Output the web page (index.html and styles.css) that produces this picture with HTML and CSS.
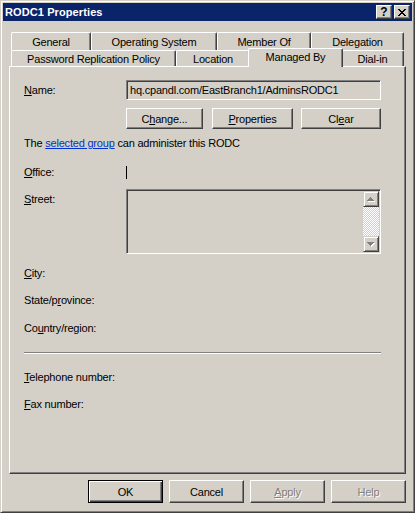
FILE: index.html
```html
<!DOCTYPE html>
<html>
<head>
<meta charset="utf-8">
<title>RODC1 Properties</title>
<link rel="stylesheet" href="styles.css">
</head>
<body>
<div class="window">
  <div class="titlebar">
    <span class="title">RODC1 Properties</span>
    <div class="tb-buttons">
      <div class="tb-btn help">?</div>
      <div class="tb-btn close">
        <svg width="8" height="7" viewBox="0 0 8 7" shape-rendering="crispEdges"><path d="M0 0h2v1H0zM6 0h2v1H6zM1 1h2v1H1zM5 1h2v1H5zM2 2h4v1H2zM3 3h2v1H3zM2 4h4v1H2zM1 5h2v1H1zM5 5h2v1H5zM0 6h2v1H0zM6 6h2v1H6z" fill="#000"/></svg>
      </div>
    </div>
  </div>

  <div class="tabs">
    <div class="tab-row back">
      <div class="tab w-general">General</div>
      <div class="tab w-os">Operating System</div>
      <div class="tab w-member">Member Of</div>
      <div class="tab w-deleg">Delegation</div>
    </div>
    <div class="tab-row front">
      <div class="tab w-prp">Password Replication Policy</div>
      <div class="tab w-loc">Location</div>
      <div class="tab sel w-managed">Managed By</div>
      <div class="tab w-dial">Dial-in</div>
    </div>
  </div>

  <div class="panel">
    <div class="row name-row">
      <span class="label"><u>N</u>ame:</span>
      <div class="field">hq.cpandl.com/EastBranch1/AdminsRODC1</div>
    </div>
    <div class="row btn-row">
      <span></span>
      <div class="btn-group">
        <div class="btn b-change">C<u>h</u>ange...</div>
        <div class="btn b-props"><u>P</u>roperties</div>
        <div class="btn b-clear">Cl<u>e</u>ar</div>
      </div>
    </div>
    <div class="info">The <a class="link">selected group</a> can administer this RODC</div>
    <div class="row office-row">
      <span class="label"><u>O</u>ffice:</span>
      <div class="caret-cell"><span class="caret"></span></div>
    </div>
    <div class="row street-row">
      <span class="label street-label"><u>S</u>treet:</span>
      <div class="textarea">
        <div class="scrollbar">
          <div class="sb-btn">
            <svg width="8" height="5" viewBox="0 0 8 5" shape-rendering="crispEdges"><path d="M4 1h1v1H4zM3 2h3v1H3zM2 3h5v1H2zM1 4h7v1H1z" fill="#fff"/><path d="M3 0h1v1H3zM2 1h3v1H2zM1 2h5v1H1zM0 3h7v1H0z" fill="#808080"/></svg>
          </div>
          <div class="sb-track"></div>
          <div class="sb-btn">
            <svg width="8" height="5" viewBox="0 0 8 5" shape-rendering="crispEdges"><path d="M1 1h7v1H1zM2 2h5v1H2zM3 3h3v1H3zM4 4h1v1H4z" fill="#fff"/><path d="M0 0h7v1H0zM1 1h5v1H1zM2 2h3v1H2zM3 3h1v1H3z" fill="#808080"/></svg>
          </div>
        </div>
      </div>
    </div>
    <div class="line city"><u>C</u>ity:</div>
    <div class="line state">State/p<u>r</u>ovince:</div>
    <div class="line country">Co<u>u</u>ntry/region:</div>
    <div class="separator"></div>
    <div class="line phone"><u>T</u>elephone number:</div>
    <div class="line fax"><u>F</u>ax number:</div>
  </div>

  <div class="dlg-buttons">
    <div class="btn dlg default">OK</div>
    <div class="btn dlg">Cancel</div>
    <div class="btn dlg disabled"><span><u>A</u>pply</span></div>
    <div class="btn dlg disabled">Help</div>
  </div>
</div>
</body>
</html>
```

FILE: styles.css
```css
* {
  box-sizing: border-box;
}

html,
body {
  margin: 0;
  padding: 0;
}

body {
  background: #d4d0c8;
  font-family: "Liberation Sans", Arial, sans-serif;
  font-size: 11px;
  letter-spacing: -0.2px;
  color: #000;
}

u {
  text-decoration: underline;
  text-underline-offset: 1px;
}

.window {
  width: 415px;
  height: 513px;
  border: 1px solid;
  border-color: #d4d0c8 #404040 #404040 #d4d0c8;
  box-shadow: inset 1px 1px #fff, inset -1px -1px #808080;
  padding: 2px;
}

/* Title bar */
.titlebar {
  height: 18px;
  background: #0a246a;
  display: flex;
  align-items: center;
  justify-content: space-between;
  padding: 0 2px;
}

.title {
  color: #fff;
  font-weight: bold;
  letter-spacing: 0.1px;
  line-height: 14px;
}

.tb-buttons {
  display: flex;
  gap: 2px;
}

.tb-btn {
  width: 16px;
  height: 14px;
  background: #d4d0c8;
  border: 1px solid;
  border-color: #fff #404040 #404040 #fff;
  box-shadow: inset -1px -1px #808080;
  display: flex;
  align-items: center;
  justify-content: center;
}

.tb-btn.help {
  font-weight: bold;
  font-size: 12px;
  line-height: 12px;
  letter-spacing: 0;
  padding-bottom: 1px;
}

.tb-btn.close svg {
  display: block;
  margin-right: 1px;
}

/* Tabs */
.tabs {
  margin: 11px 0 0 8px;
  width: 393px;
}

.tab-row {
  display: flex;
}

.tab-row.back {
  height: 18px;
}

.tab-row.front {
  height: 16px;
}

.tab {
  height: 100%;
  flex: none;
  background: #d4d0c8;
  border-top: 1px solid #fff;
  border-left: 1px solid #fff;
  border-right: 1px solid #404040;
  box-shadow: inset -1px 0 #808080;
  border-radius: 2px 2px 0 0;
  display: flex;
  align-items: center;
  justify-content: center;
  white-space: nowrap;
}

.w-general { width: 80px; }
.w-os { width: 126px; }
.w-member { width: 94px; }
.w-deleg { width: 93px; }
.w-prp { width: 165px; }
.w-loc { width: 74px; }
.w-managed { width: 91px; }
.w-dial { width: 63px; }

.tab.sel {
  position: relative;
  z-index: 1;
  width: 95px;
  height: 19px;
  margin: -2px -2px 0 -2px;
  padding-bottom: 2px;
}

/* Panel */
.panel {
  margin-left: 6px;
  width: 397px;
  height: 408px;
  border: 1px solid;
  border-color: #fff #404040 #404040 #fff;
  box-shadow: inset -1px -1px #808080;
  padding: 13px 0 0 14px;
}

.row {
  display: grid;
  grid-template-columns: 102px 255px;
  line-height: 14px;
}

.name-row {
  height: 20px;
  align-items: center;
}

.field {
  height: 20px;
  border: 1px solid;
  border-color: #808080 #fff #fff #808080;
  box-shadow: inset 1px 1px #404040, inset -1px -1px #d4d0c8;
  padding-left: 3px;
  display: flex;
  align-items: center;
  white-space: nowrap;
}

.btn-row {
  margin-top: 8px;
  height: 21px;
}

.btn-group {
  display: flex;
}

.btn {
  height: 21px;
  background: #d4d0c8;
  border: 1px solid;
  border-color: #fff #404040 #404040 #fff;
  box-shadow: inset -1px -1px #808080;
  display: flex;
  align-items: center;
  justify-content: center;
  white-space: nowrap;
  line-height: 14px;
}

.b-change { width: 77px; }
.b-props { width: 81px; margin-left: 9px; }
.b-clear { width: 80px; margin-left: 8px; }

.info {
  margin-top: 7px;
  line-height: 14px;
}

.link {
  color: #0033cc;
  text-decoration: underline;
}

.office-row {
  margin-top: 15px;
  height: 14px;
}

.caret-cell {
  display: flex;
}

.caret {
  width: 1px;
  height: 13px;
  margin-top: 1px;
  background: #000;
}

.street-row {
  margin-top: 10px;
}

.street-label {
  padding-top: 3px;
}

.textarea {
  height: 65px;
  border: 1px solid;
  border-color: #808080 #fff #fff #808080;
  box-shadow: inset 1px 1px #404040, inset -1px -1px #d4d0c8;
  padding: 1px;
  display: flex;
  justify-content: flex-end;
}

.scrollbar {
  width: 16px;
  display: flex;
  flex-direction: column;
}

.sb-btn {
  width: 16px;
  height: 16px;
  flex: none;
  background: #d4d0c8;
  border: 1px solid;
  border-color: #d4d0c8 #404040 #404040 #d4d0c8;
  box-shadow: inset 1px 1px #fff, inset -1px -1px #808080;
  display: flex;
  align-items: center;
  justify-content: center;
}

.sb-btn svg {
  display: block;
}

.sb-track {
  flex: 1;
  background: repeating-conic-gradient(#d4d0c8 0 25%, #fff 0 50%) 0 0 / 2px 2px;
}

.line {
  line-height: 14px;
  height: 14px;
}

.city { margin-top: 12px; }
.state { margin-top: 13px; }
.country { margin-top: 14px; }

.separator {
  margin-top: 17px;
  width: 357px;
  height: 2px;
  border-top: 1px solid #808080;
  border-bottom: 1px solid #fff;
}

.phone { margin-top: 16px; }
.fax { margin-top: 13px; }

/* Dialog buttons */
.dlg-buttons {
  margin: 6px 0 0 6px;
  width: 397px;
  display: flex;
  justify-content: flex-end;
  gap: 6px;
}

.btn.dlg {
  width: 75px;
  height: 23px;
}

.btn.default {
  border-color: #000;
  box-shadow: inset 1px 1px #fff, inset -1px -1px #404040, inset -2px -2px #808080;
}

.btn.disabled {
  color: #808080;
  text-shadow: 1px 1px #fff;
}
```
